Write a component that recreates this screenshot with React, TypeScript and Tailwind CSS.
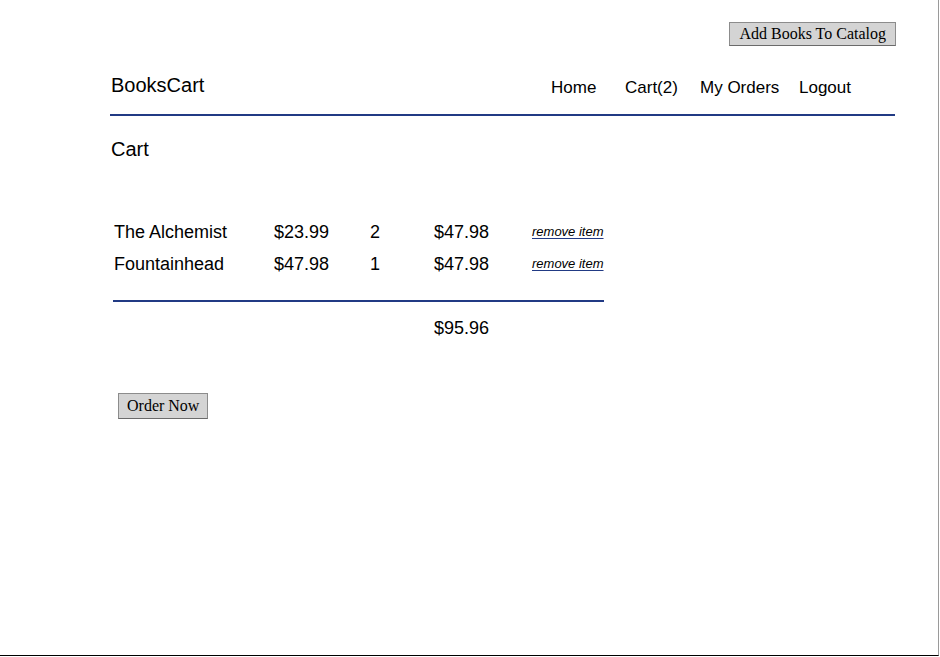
import React from "react";

const rows = [
  { name: "The Alchemist", price: "$23.99", qty: "2", total: "$47.98" },
  { name: "Fountainhead", price: "$47.98", qty: "1", total: "$47.98" },
];

export default function App() {
  return (
    <div
      className="w-[939px] h-[656px] bg-white text-black border-r border-r-[#9a9a9a] border-b border-b-black overflow-hidden"
      style={{ fontFamily: '"Liberation Sans", Arial, sans-serif' }}
    >
      <div className="flex justify-end pt-[22px] pr-[42px]">
        <button
          className="h-[24px] px-[9px] bg-[#d4d4d4] border border-[#8c8c8c] border-b-[#6a6a6a] text-[16px] leading-none text-black"
          style={{ fontFamily: '"Liberation Serif", "Times New Roman", serif' }}
        >
          Add Books To Catalog
        </button>
      </div>

      <div className="ml-[110px] w-[785px] mt-[27px] h-[43px] border-b-2 border-[#213a84] flex items-start">
        <div className="pl-[1px] text-[20px] leading-[24px]">BooksCart</div>
        <div className="ml-auto flex items-baseline text-[17px] leading-[24px] pt-[3px]">
          <span className="w-[74px]">Home</span>
          <span className="w-[75px]">Cart(2)</span>
          <span className="w-[99px]">My Orders</span>
          <span className="w-[96px]">Logout</span>
        </div>
      </div>

      <div className="ml-[111px] mt-[21px] text-[20px] leading-[24px]">Cart</div>

      <div className="ml-[114px] mt-[55px] w-[490px]">
        {rows.map((r) => (
          <div key={r.name} className="flex items-center h-[32px] text-[18px]">
            <span className="w-[160px]">{r.name}</span>
            <span className="w-[96px]">{r.price}</span>
            <span className="w-[64px]">{r.qty}</span>
            <span className="w-[98px]">{r.total}</span>
            <span className="text-[13px] italic underline decoration-[#213a84] underline-offset-2">
              remove item
            </span>
          </div>
        ))}
      </div>

      <div className="ml-[113px] mt-[20px] w-[491px] h-[2px] bg-[#213a84]" />

      <div className="ml-[434px] mt-[10px] h-[32px] flex items-center text-[18px]">$95.96</div>

      <div className="ml-[118px] mt-[49px]">
        <button
          className="h-[26px] px-[8px] bg-[#d4d4d4] border border-[#8c8c8c] border-b-[#6a6a6a] text-[16px] leading-none text-black"
          style={{ fontFamily: '"Liberation Serif", "Times New Roman", serif' }}
        >
          Order Now
        </button>
      </div>
    </div>
  );
}
